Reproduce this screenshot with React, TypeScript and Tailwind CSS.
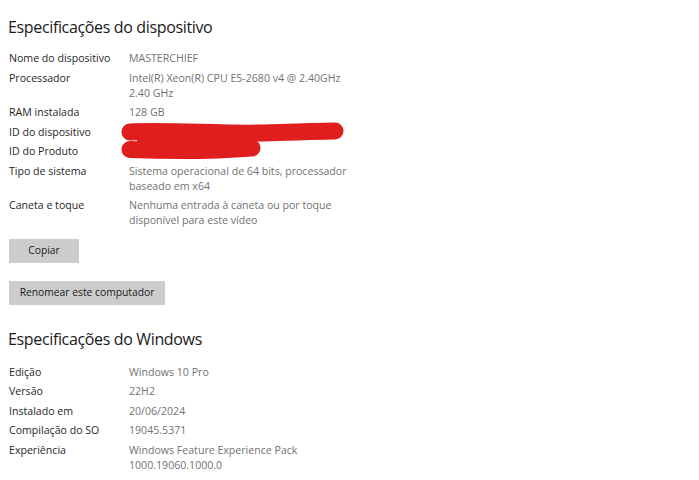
const deviceRows: { label: string; lines: string[] }[] = [
  { label: 'Nome do dispositivo', lines: ['MASTERCHIEF'] },
  { label: 'Processador', lines: ['Intel(R) Xeon(R) CPU E5-2680 v4 @ 2.40GHz', '2.40 GHz'] },
  { label: 'RAM instalada', lines: ['128 GB'] },
  { label: 'ID do dispositivo', lines: [''] },
  { label: 'ID do Produto', lines: [''] },
  { label: 'Tipo de sistema', lines: ['Sistema operacional de 64 bits, processador', 'baseado em x64'] },
  { label: 'Caneta e toque', lines: ['Nenhuma entrada à caneta ou por toque', 'disponível para este vídeo'] },
];

const windowsRows: { label: string; lines: string[] }[] = [
  { label: 'Edição', lines: ['Windows 10 Pro'] },
  { label: 'Versão', lines: ['22H2'] },
  { label: 'Instalado em', lines: ['20/06/2024'] },
  { label: 'Compilação do SO', lines: ['19045.5371'] },
  { label: 'Experiência', lines: ['Windows Feature Experience Pack', '1000.19060.1000.0'] },
];

function SpecList({ rows }: { rows: { label: string; lines: string[] }[] }) {
  return (
    <div className="flex flex-col gap-[4.5px]">
      {rows.map((r) => (
        <div key={r.label} className="flex text-[10.6px] leading-[15px]">
          <div className="w-[120px] shrink-0 text-[#1f1f1f]">{r.label}</div>
          <div className="text-[#727272]">
            {r.lines.map((l, i) => (
              <div key={i} className="h-[15px]">
                {l}
              </div>
            ))}
          </div>
        </div>
      ))}
    </div>
  );
}

// rabisco vermelho que tapa os IDs
function Scribble() {
  return (
    <svg
      className="pointer-events-none absolute left-0 top-0"
      width="360"
      height="130"
      viewBox="0 0 360 130"
    >
      <path
        d="M121 81 C160 79 210 83 255 82 C290 81 310 80 326 80"
        stroke="#e01e1e"
        strokeWidth="17"
        strokeLinecap="round"
        fill="none"
      />
      <path d="M128 90 L236 91" stroke="#e01e1e" strokeWidth="10" fill="none" />
      <path
        d="M121 98.5 C160 100 205 100 243 97"
        stroke="#e01e1e"
        strokeWidth="17"
        strokeLinecap="round"
        fill="none"
      />
    </svg>
  );
}

export default function App() {
  return (
    <div
      className="min-h-[480px] w-[699px] bg-white pl-[9px] pt-[14.5px]"
      style={{ fontFamily: '"Open Sans", "Noto Sans", sans-serif' }}
    >
      <h1 className="-ml-[1px] text-[16px] font-normal leading-[24px] tracking-[-0.35px] text-[#1a1a1a]">
        Especificações do dispositivo
      </h1>
      <div className="relative mt-[12.5px]">
        <SpecList rows={deviceRows} />
        <Scribble />
      </div>
      <button className="mt-[10.5px] block h-[24px] w-[70px] bg-[#cccccc] text-[10.3px] text-[#1a1a1a]">
        Copiar
      </button>
      <button className="mt-[18px] block h-[24px] w-[156px] bg-[#cccccc] text-[10.3px] text-[#1a1a1a]">
        Renomear este computador
      </button>
      <h1 className="-ml-[1px] mt-[22.8px] text-[16px] font-normal leading-[24px] tracking-[-0.35px] text-[#1a1a1a]">
        Especificações do Windows
      </h1>
      <div className="mt-[13.4px]">
        <SpecList rows={windowsRows} />
      </div>
    </div>
  );
}
